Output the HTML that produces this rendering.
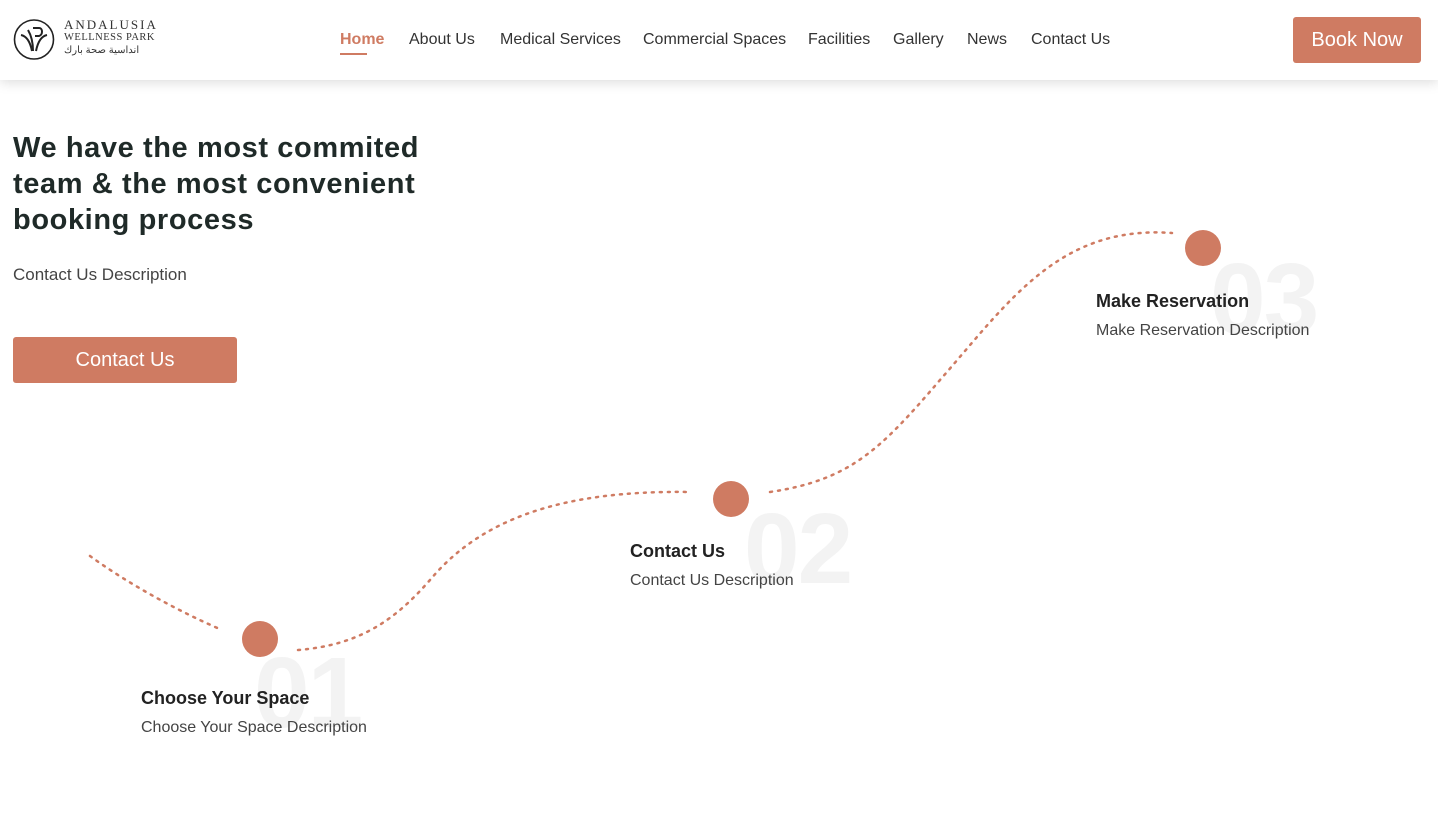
<!DOCTYPE html>
<html><head><meta charset="utf-8"><style>
*{margin:0;padding:0;box-sizing:border-box}
body{width:1438px;height:817px;background:#fff;font-family:"Liberation Sans",sans-serif;position:relative;overflow:hidden;color:#222}
.hdr{position:absolute;left:0;top:0;width:1438px;height:80px;background:#fff;box-shadow:0 2px 12px rgba(0,0,0,.15);z-index:2}
.nav{position:absolute;top:31px;font-size:16px;color:#333}
.nav span{position:absolute;white-space:nowrap}
.btn{position:absolute;background:#cf7b62;color:#fff;border-radius:3px;text-align:center}
.big{position:absolute;font-weight:bold;font-size:100px;color:#f3f3f3;letter-spacing:-2px}
.t{position:absolute;font-weight:bold;font-size:18px;color:#222;white-space:nowrap}
.d{position:absolute;font-size:16px;color:#444;white-space:nowrap}
</style></head><body>
<div class="hdr">
<svg style="position:absolute;left:13px;top:18px" width="42" height="43" viewBox="0 0 42 43"><circle cx="21" cy="21.5" r="19.5" fill="none" stroke="#222" stroke-width="1.6"/><path d="M8 17c5 1 9 6 11 16M34 17c-5 1-9 6-11 16M15 12c3 5 5 11 5 21M20 10h6c4 0 4 7 0 8h-4" fill="none" stroke="#222" stroke-width="2"/></svg>
<div style="position:absolute;left:64px;top:17px;font-family:'Liberation Serif',serif;font-size:13px;letter-spacing:2px;color:#333">ANDALUSIA</div>
<div style="position:absolute;left:64px;top:32px;font-family:'Liberation Serif',serif;font-size:10.5px;letter-spacing:.5px;color:#333">WELLNESS PARK</div>
<div style="position:absolute;left:64px;top:45px;font-size:10px;color:#333">انداسية صحة بارك</div>
<div class="nav">
<span style="left:340px;color:#cf7b62;font-weight:bold">Home</span>
<span style="left:340px;top:22px;width:27px;height:2px;background:#cf7b62"></span>
<span style="left:409px">About Us</span>
<span style="left:500px">Medical Services</span>
<span style="left:643px">Commercial Spaces</span>
<span style="left:808px">Facilities</span>
<span style="left:893px">Gallery</span>
<span style="left:967px">News</span>
<span style="left:1031px">Contact Us</span>
</div>
<div class="btn" style="left:1293px;top:17px;width:128px;height:46px;line-height:46px;font-size:20px">Book Now</div>
</div>
<div style="position:absolute;left:13px;top:130px;font-size:29px;font-weight:bold;line-height:36px;color:#1f2a28;width:440px;letter-spacing:0.6px">We have the most commited team &amp; the most convenient booking process</div>
<div class="d" style="left:13px;top:265px;font-size:17px">Contact Us Description</div>
<div class="btn" style="left:13px;top:337px;width:224px;height:46px;line-height:46px;font-size:20px">Contact Us</div>
<div class="big" style="left:254px;top:636px">01</div>
<div class="big" style="left:744px;top:492px">02</div>
<div class="big" style="left:1210px;top:242px">03</div>
<svg style="position:absolute;left:0;top:0" width="1438" height="817">
<g fill="none" stroke="#cf7b62" stroke-width="2.5" stroke-dasharray="2 6" stroke-linecap="round">
<path d="M90 556 C130 585 180 612 222 630"/>
<path d="M298 650 C360 645 395 620 430 580 C480 520 560 490 690 492"/>
<path d="M770 492 C850 480 880 450 940 380 C1010 300 1060 225 1172 233"/>
</g>
<g fill="#cf7b62"><circle cx="260" cy="639" r="18"/><circle cx="731" cy="499" r="18"/><circle cx="1203" cy="248" r="18"/></g>
</svg>
<div class="t" style="left:141px;top:688px">Choose Your Space</div>
<div class="d" style="left:141px;top:719px">Choose Your Space Description</div>
<div class="t" style="left:630px;top:541px">Contact Us</div>
<div class="d" style="left:630px;top:572px">Contact Us Description</div>
<div class="t" style="left:1096px;top:291px">Make Reservation</div>
<div class="d" style="left:1096px;top:322px">Make Reservation Description</div>
</body></html>
